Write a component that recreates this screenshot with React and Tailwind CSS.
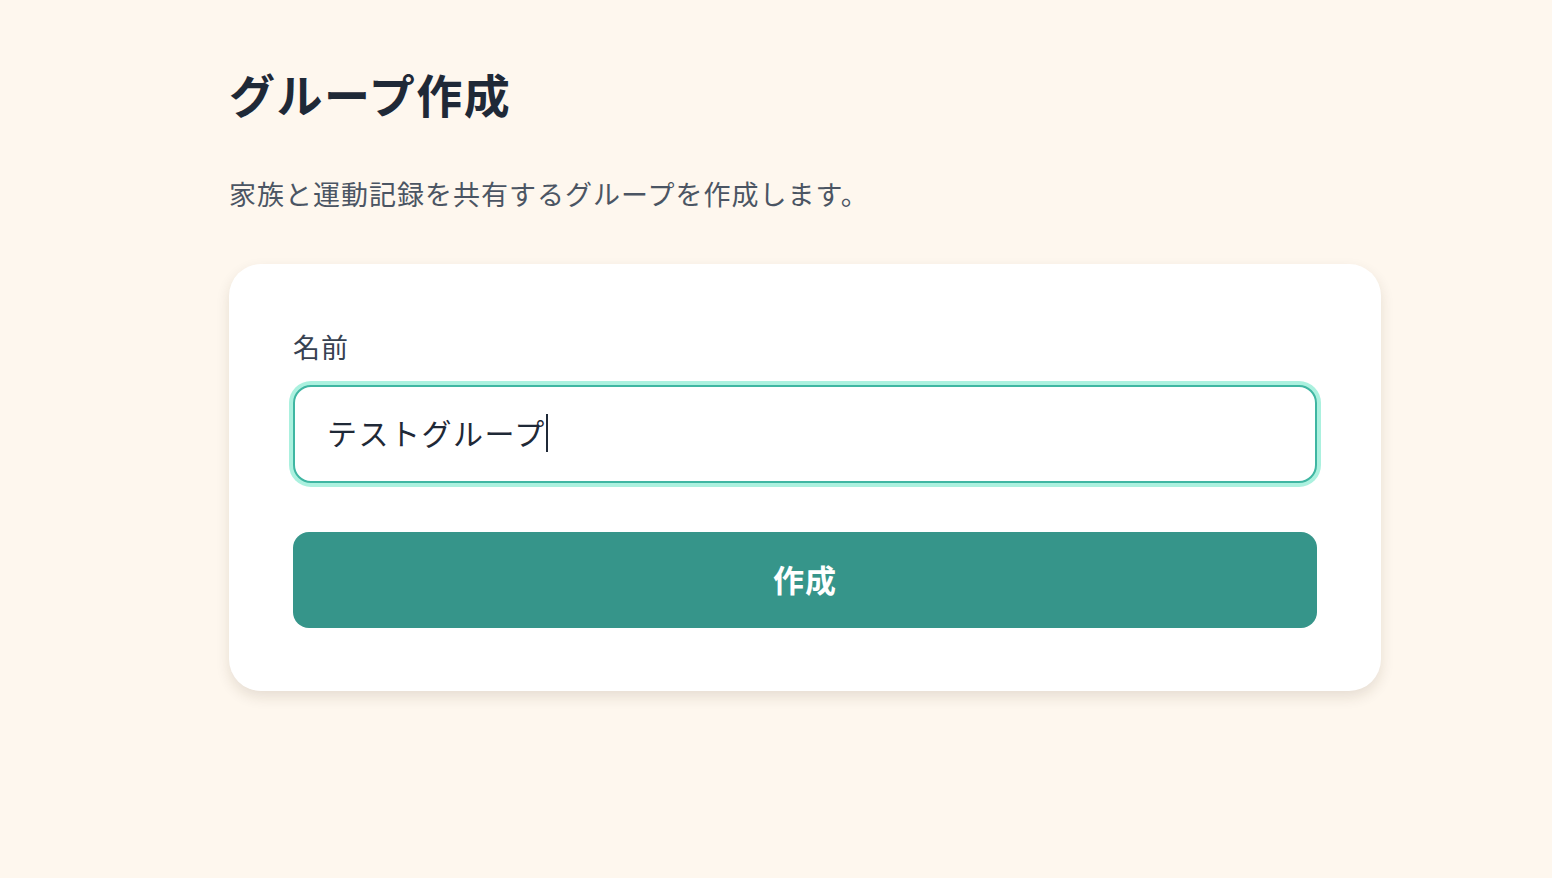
import { useState } from 'react'

// ── Group create page ─────────────────────────────────────────────────────────

const FONT = { fontFamily: '"Noto Sans CJK JP", "Noto Sans", sans-serif' }

export default function App() {
  const [name] = useState('テストグループ')

  return (
    <div className="min-h-screen bg-[#fef7ee] pt-[66px]" style={FONT}>
      <div className="ml-[229px] w-[1152px]">
        <h1 className="text-[46px] leading-[55px] font-bold text-[#1f2937] tracking-[1.5px]">
          グループ作成
        </h1>
        <p className="mt-[53px] text-[27px] leading-[40px] text-[#4b5563] tracking-[1px]">
          家族と運動記録を共有するグループを作成します。
        </p>

        {/* Card */}
        <div className="mt-[50px] bg-white rounded-[32px] px-[64px] pt-[63px] pb-[63px] shadow-[0_6px_14px_rgba(60,40,20,0.12)]">
          <label className="block text-[27px] leading-[40px] text-[#374151] tracking-[1px]">名前</label>
          <div className="mt-[18px] h-[98px] flex items-center rounded-[18px] border-2 border-[#3fb6a2] ring-4 ring-[#abf1df] bg-white px-[32px] pb-[4px]">
            <span className="text-[30px] text-[#1f2937] tracking-[1.5px]">{name}</span>
            <span className="w-[2px] h-[38px] bg-[#1f2937] mt-[2px]" />
          </div>
          <button className="mt-[49px] w-full h-[96px] rounded-[16px] bg-[#36958a] text-white text-[31px] font-bold tracking-[1px] pb-[2px]">
            作成
          </button>
        </div>
      </div>
    </div>
  )
}
